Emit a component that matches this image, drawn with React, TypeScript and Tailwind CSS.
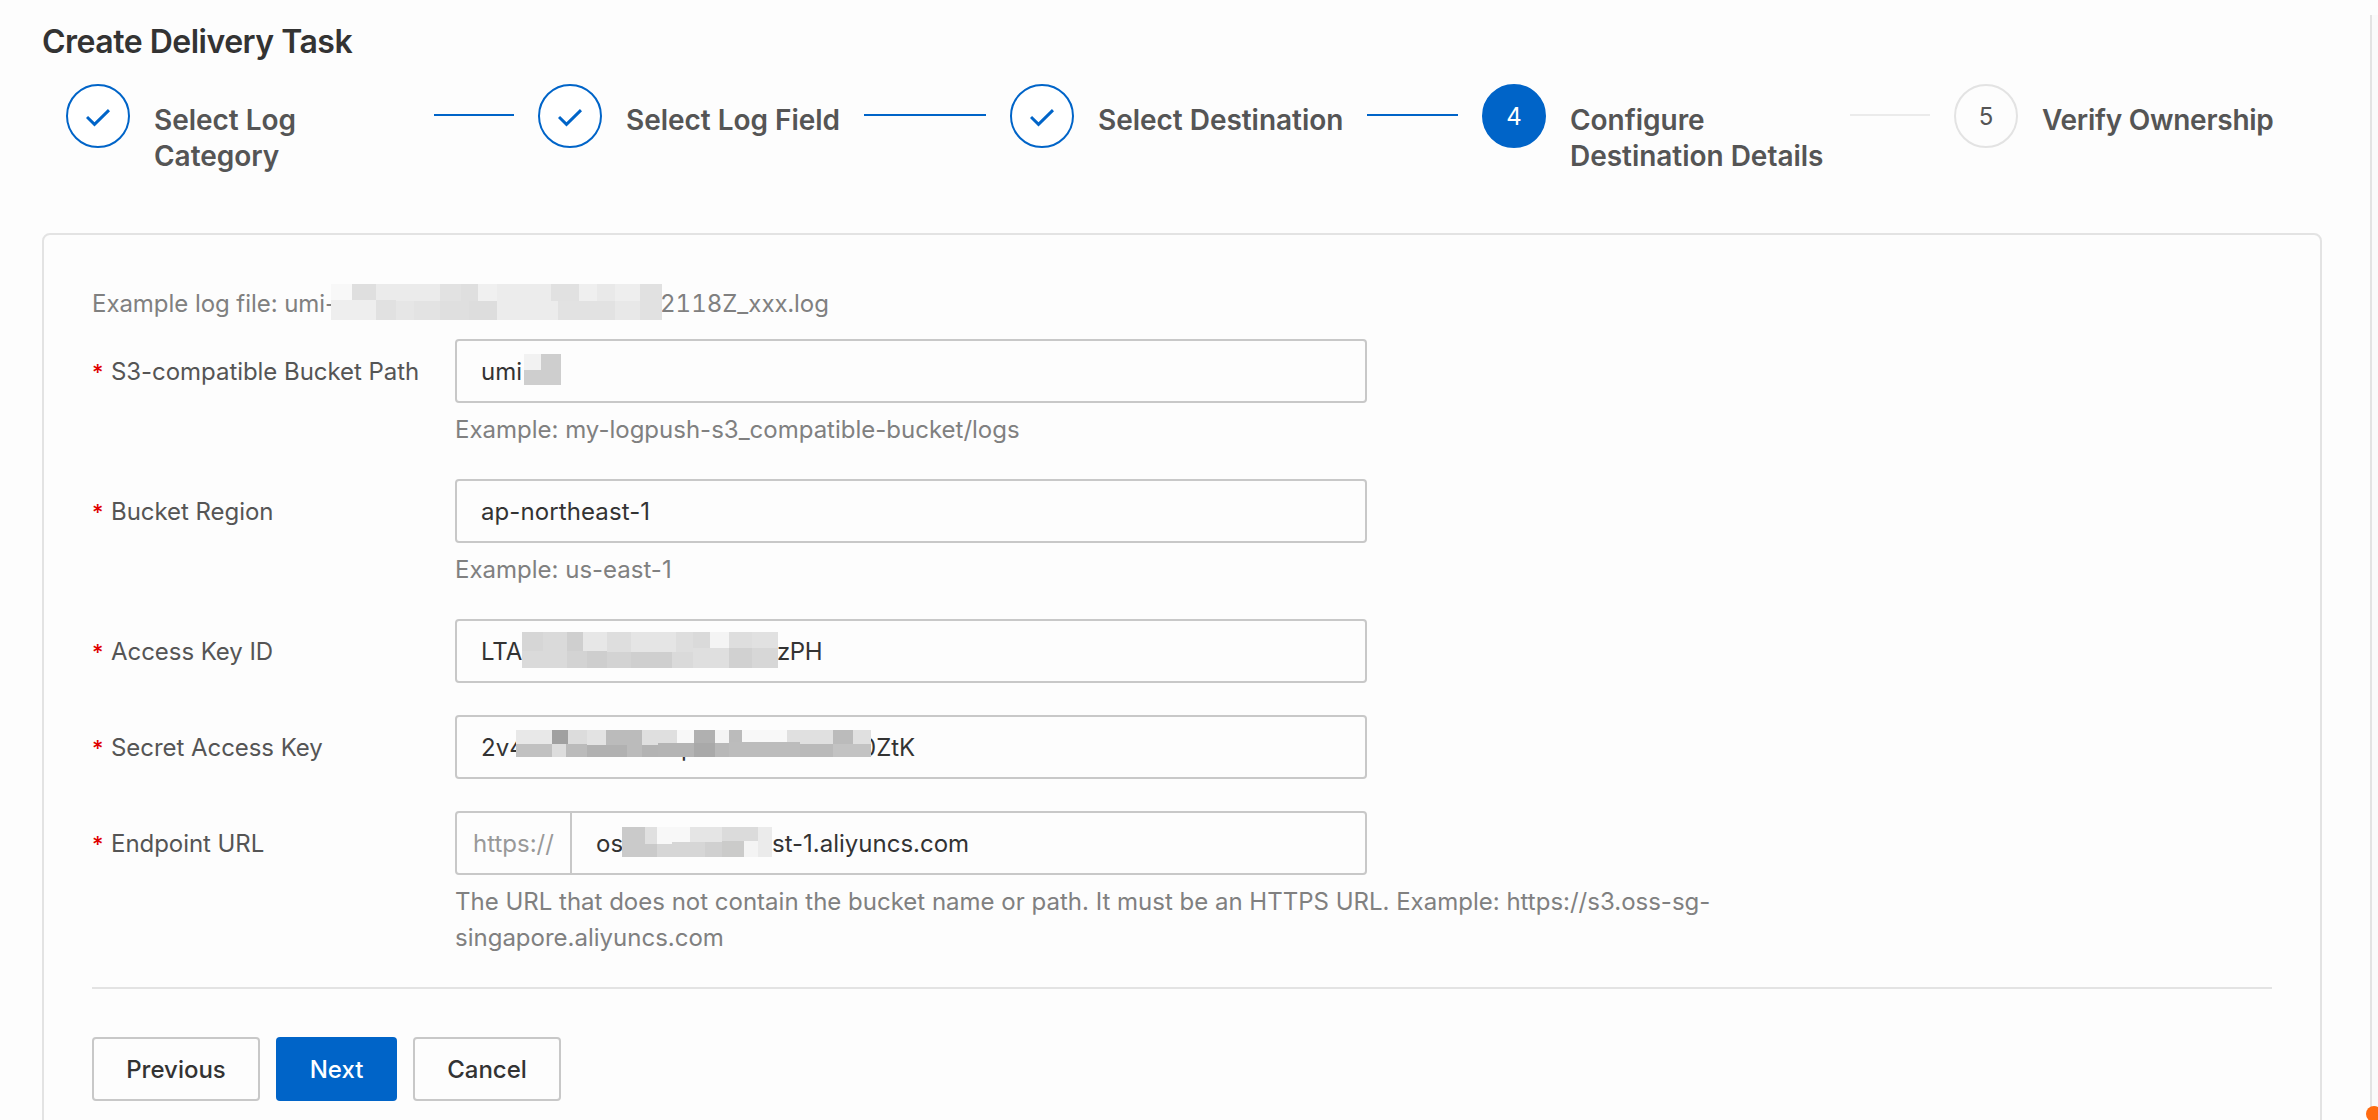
import React from 'react';

type Block = [x: number, y: number, w: number, h: number, fill: string];

interface StepItem {
  title: string;
  status: 'done' | 'current' | 'todo';
}

const steps: StepItem[] = [
  { title: 'Select Log Category', status: 'done' },
  { title: 'Select Log Field', status: 'done' },
  { title: 'Select Destination', status: 'done' },
  { title: 'Configure Destination Details', status: 'current' },
  { title: 'Verify Ownership', status: 'todo' },
];

const logFileBlocks: Block[] = [
  [0, 0, 21, 17, '#f8f8f8'],
  [21, 0, 24, 17, '#dfdfdf'],
  [45, 0, 64, 17, '#ebebeb'],
  [109, 0, 21, 17, '#e2e2e2'],
  [130, 0, 17, 17, '#dfdfdf'],
  [147, 0, 19, 17, '#f0f0f0'],
  [166, 0, 61, 36, '#ececec'],
  [220, 0, 28, 17, '#e1e1e1'],
  [248, 0, 18, 17, '#efefef'],
  [266, 0, 18, 17, '#e9e9e9'],
  [284, 0, 25, 17, '#eeeeee'],
  [309, 0, 22, 36, '#e1e1e1'],
  [0, 16, 45, 20, '#eeeeee'],
  [45, 16, 20, 20, '#e1e1e1'],
  [65, 17, 18, 19, '#e6e6e6'],
  [83, 17, 26, 19, '#e3e3e3'],
  [109, 17, 29, 19, '#dfdfdf'],
  [138, 17, 28, 19, '#dddddd'],
  [227, 17, 57, 19, '#e2e2e2'],
  [284, 17, 25, 19, '#e8e8e8'],
];

const bucketBlocks: Block[] = [
  [0, 0, 37, 31, '#cecece'],
  [0, 0, 17, 16, '#f2f2f2'],
];

const accessKeyBlocks: Block[] = [
  [0, 0, 21, 20, '#d6d6d6'],
  [21, 0, 24, 20, '#dadada'],
  [45, 0, 16, 19, '#cfcfcf'],
  [61, 0, 24, 19, '#e7e7e7'],
  [85, 0, 24, 20, '#dedede'],
  [109, 0, 45, 20, '#e5e5e5'],
  [154, 0, 17, 20, '#dedede'],
  [171, 0, 17, 16, '#dadada'],
  [188, 0, 19, 16, '#f4f4f4'],
  [207, 0, 23, 16, '#dedede'],
  [230, 0, 26, 16, '#e1e1e1'],
  [0, 19, 45, 17, '#dadada'],
  [45, 19, 20, 17, '#d3d3d3'],
  [65, 19, 20, 17, '#cecece'],
  [85, 20, 24, 16, '#d3d3d3'],
  [109, 20, 41, 16, '#cfcfcf'],
  [150, 20, 21, 16, '#dadada'],
  [171, 16, 36, 20, '#dfdfdf'],
  [207, 16, 23, 20, '#d1d1d1'],
  [230, 16, 26, 20, '#d7d7d7'],
];

const secretBlocks: Block[] = [
  [0, 0, 36, 14, '#e8e8e8'],
  [36, 0, 16, 14, '#a0a0a0'],
  [52, 0, 19, 14, '#dcdcdc'],
  [71, 0, 19, 15, '#e3e3e3'],
  [90, 0, 36, 15, '#bbbbbb'],
  [126, 0, 35, 15, '#dfdfdf'],
  [161, 0, 17, 14, '#f8f8f8'],
  [178, 0, 21, 13, '#b0b0b0'],
  [199, 0, 14, 13, '#f4f4f4'],
  [213, 0, 13, 13, '#bbbbbb'],
  [226, 0, 45, 13, '#f8f8f8'],
  [271, 0, 46, 14, '#e0e0e0'],
  [317, 0, 20, 14, '#bbbbbb'],
  [337, 0, 18, 14, '#e0e0e0'],
  [0, 14, 36, 13, '#c1c1c1'],
  [36, 14, 14, 13, '#dddddd'],
  [50, 14, 21, 13, '#bbbbbb'],
  [71, 15, 40, 12, '#b1b1b1'],
  [111, 15, 15, 12, '#bbbbbb'],
  [126, 15, 16, 12, '#b3b3b3'],
  [142, 13, 36, 14, '#b4b4b4'],
  [178, 13, 21, 14, '#a9a9a9'],
  [199, 13, 14, 14, '#b8b8b8'],
  [213, 12, 71, 15, '#bcbcbc'],
  [284, 14, 33, 13, '#bababa'],
  [317, 14, 38, 13, '#c3c3c3'],
];

const endpointBlocks: Block[] = [
  [0, 0, 23, 17, '#cacaca'],
  [23, 0, 12, 17, '#e0e0e0'],
  [35, 0, 33, 17, '#f8f8f8'],
  [68, 0, 32, 15, '#e5e5e5'],
  [100, 0, 38, 14, '#dbdbdb'],
  [136, 0, 14, 30, '#ebebeb'],
  [0, 17, 35, 13, '#cacaca'],
  [35, 17, 15, 13, '#d6d6d6'],
  [50, 15, 33, 15, '#d6d6d6'],
  [83, 15, 17, 15, '#d0d0d0'],
  [100, 14, 22, 16, '#cbcbca'],
  [122, 14, 14, 16, '#f4f4f4'],
];

const Mosaic: React.FC<{ width: number; height: number; blocks: Block[]; className?: string }> = ({
  width,
  height,
  blocks,
  className = '',
}) => (
  <svg
    width={width}
    height={height}
    shapeRendering="crispEdges"
    className={`relative shrink-0 ${className}`}
  >
    {blocks.map(([x, y, w, h, fill], i) => (
      <rect key={i} x={x} y={y} width={w} height={h} fill={fill} />
    ))}
  </svg>
);

const CheckIcon: React.FC = () => (
  <svg width="24" height="18" viewBox="0 0 24 18" fill="none" className="mt-1">
    <path d="M1 8 L8.5 15.3 L23 1.2" stroke="#0064c8" strokeWidth="3" />
  </svg>
);

const Step: React.FC<{ item: StepItem; index: number; last: boolean }> = ({ item, index, last }) => {
  const circle = {
    done: 'border-[#0064c8] bg-white',
    current: 'border-[#0064c8] bg-[#0064c8] text-white',
    todo: 'border-[#e3e3e3] text-[#555]',
  }[item.status];

  return (
    <li className="flex w-[472px] shrink-0 items-start">
      <span
        className={`flex h-16 w-16 shrink-0 items-center justify-center rounded-full border-2 text-2xl ${circle}`}
      >
        {item.status === 'done' ? <CheckIcon /> : <span className="pt-0.5">{index + 1}</span>}
      </span>
      <span
        className={`ml-6 mt-[18px] max-w-[256px] text-[28px] font-semibold leading-9 text-[#555] ${last ? 'tracking-[-0.25px]' : 'tracking-[-0.03px]'}`}
      >
        {item.title}
      </span>
      {!last && (
        <span
          className={`mx-6 mt-[30px] h-0.5 flex-1 ${item.status === 'done' ? 'bg-[#0064c8]' : 'bg-[#ebebeb]'}`}
        />
      )}
    </li>
  );
};

interface FieldProps {
  label: string;
  help?: string;
  prefix?: string;
  className?: string;
  children: React.ReactNode;
}

const Field: React.FC<FieldProps> = ({ label, help, prefix, className = '', children }) => (
  <div className={`flex items-start ${className}`}>
    <div className="flex h-16 w-[363px] shrink-0 items-center whitespace-nowrap pt-0.5 tracking-[-0.05px] text-[#555]">
      <span className="mr-[7px] w-3 text-[22px] font-medium text-[#e00000]">*</span>
      {label}
    </div>
    <div>
      <div className="flex h-16 w-[912px] items-stretch rounded-[4px] border-2 border-[#c8c8c8] text-[#333]">
        {prefix && (
          <span className="flex w-[115px] items-center border-r-2 border-[#c8c8c8] pl-4 pt-0.5 text-[#999]">
            {prefix}
          </span>
        )}
        <div className="flex items-center pl-6 pt-0.5">{children}</div>
      </div>
      {help && <p className="mt-[9px] w-[1270px] leading-9 text-[#808080]">{help}</p>}
    </div>
  </div>
);

export default function App() {
  return (
    <div className="flex h-[1120px] w-[2378px] overflow-hidden bg-[#fdfdfd] font-['Inter','Liberation_Sans',sans-serif] text-[24px] text-[#333]">
      <main className="w-[2370px] shrink-0 pl-[42px]">
        <h1 className="pt-[21px] text-[32px] font-semibold leading-[42px] tracking-[-0.5px]">
          Create Delivery Task
        </h1>

        <ol className="ml-6 mt-[21px] flex h-[149px]">
          {steps.map((item, i) => (
            <Step key={item.title} item={item} index={i} last={i === steps.length - 1} />
          ))}
        </ol>

        <section className="h-[900px] w-[2280px] rounded-lg border-2 border-[#e3e3e3] px-12 pt-[51px]">
          <div className="flex h-9 items-center text-[#808080]">
            <span className="w-[239px] whitespace-nowrap tracking-[-0.05px]">Example log file: umi-</span>
            <Mosaic width={331} height={36} blocks={logFileBlocks} className="-mt-1" />
            <span className="-ml-0.5 tabular-nums">2118Z_xxx.log</span>
          </div>

          <Field
            label="S3-compatible Bucket Path"
            help="Example: my-logpush-s3_compatible-bucket/logs"
            className="mt-[17px]"
          >
            <span className="w-[43px]">umi</span>
            <Mosaic width={37} height={31} blocks={bucketBlocks} className="-mt-[5px]" />
          </Field>

          <Field label="Bucket Region" help="Example: us-east-1" className="mt-[31px]">
            <span className="tracking-[0.1px]">ap-northeast-1</span>
          </Field>

          <Field label="Access Key ID" className="mt-[31px]">
            <span className="w-[41px]">LTA</span>
            <Mosaic width={256} height={36} blocks={accessKeyBlocks} className="-mt-1" />
            <span className="-ml-px tracking-[-0.4px]">zPH</span>
          </Field>

          <Field label="Secret Access Key" className="mt-8">
            <span className="w-[35px] whitespace-nowrap">2v4</span>
            <span className="relative -mt-[9px] flex h-[27px] w-[355px]">
              <span className="absolute left-[165px] top-0 leading-9">p</span>
              <Mosaic width={355} height={27} blocks={secretBlocks} />
            </span>
            <span className="-ml-[10px]">0ZtK</span>
          </Field>

          <Field
            label="Endpoint URL"
            prefix="https://"
            help="The URL that does not contain the bucket name or path. It must be an HTTPS URL. Example: https://s3.oss-sg-singapore.aliyuncs.com"
            className="mt-8"
          >
            <span className="w-[26px]">os</span>
            <Mosaic width={150} height={30} blocks={endpointBlocks} className="-mt-1" />
            <span>st-1.aliyuncs.com</span>
          </Field>

          <hr className="mt-[31px] border-t-2 border-[#e3e3e3]" />

          <div className="mt-12 flex gap-4 font-medium">
            <button className="h-16 w-[168px] rounded-[4px] border-2 border-[#c8c8c8] pt-0.5">Previous</button>
            <button className="h-16 w-[121px] rounded-[4px] bg-[#0064c8] pt-0.5 text-white">Next</button>
            <button className="h-16 w-[148px] rounded-[4px] border-2 border-[#c8c8c8] pt-0.5">Cancel</button>
          </div>
        </section>
      </main>

      <aside className="relative mt-[15px] w-2 shrink-0 border-l-2 border-[#e3e3e3] bg-[#fafafa]">
        <span className="absolute -left-1.5 top-[1091px] h-4 w-4 rounded-full bg-[#ff6a0f]" />
      </aside>
    </div>
  );
}
